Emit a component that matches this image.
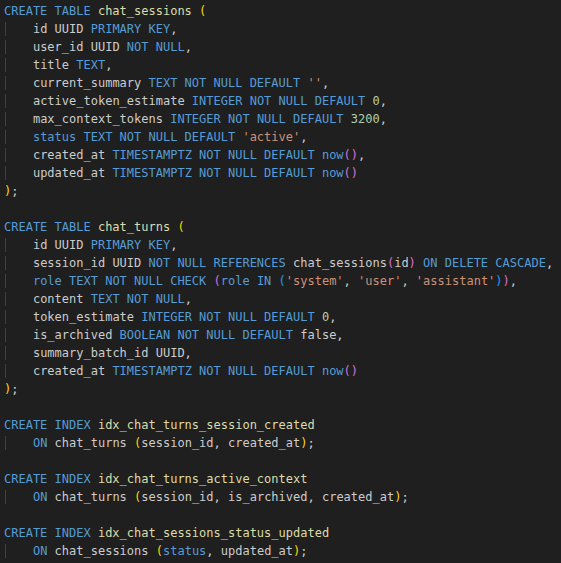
type Tok = [string, string];

const K = "text-[#569cd6]";
const N = "text-[#cccccc]";
const F = "text-[#dcdcaa]";
const S = "text-[#ce9178]";
const D = "text-[#b5cea8]";
const B1 = "text-[#ffd700]";
const B2 = "text-[#da70d6]";
const B3 = "text-[#179fff]";

// each line: indented?, tokens
const lines: [boolean, Tok[]][] = [
  [false, [[K, "CREATE TABLE "], [F, "chat_sessions "], [B1, "("]]],
  [true, [[N, "id UUID "], [K, "PRIMARY KEY"], [N, ","]]],
  [true, [[N, "user_id UUID "], [K, "NOT NULL"], [N, ","]]],
  [true, [[N, "title "], [K, "TEXT"], [N, ","]]],
  [true, [[N, "current_summary "], [K, "TEXT NOT NULL DEFAULT "], [S, "''"], [N, ","]]],
  [true, [[N, "active_token_estimate "], [K, "INTEGER NOT NULL DEFAULT "], [D, "0"], [N, ","]]],
  [true, [[N, "max_context_tokens "], [K, "INTEGER NOT NULL DEFAULT "], [D, "3200"], [N, ","]]],
  [true, [[K, "status TEXT NOT NULL DEFAULT "], [S, "'active'"], [N, ","]]],
  [true, [[N, "created_at "], [K, "TIMESTAMPTZ NOT NULL DEFAULT now"], [B2, "()"], [N, ","]]],
  [true, [[N, "updated_at "], [K, "TIMESTAMPTZ NOT NULL DEFAULT now"], [B2, "()"]]],
  [false, [[B1, ")"], [N, ";"]]],
  [false, []],
  [false, [[K, "CREATE TABLE "], [F, "chat_turns "], [B1, "("]]],
  [true, [[N, "id UUID "], [K, "PRIMARY KEY"], [N, ","]]],
  [
    true,
    [
      [N, "session_id UUID "],
      [K, "NOT NULL REFERENCES "],
      [N, "chat_sessions"],
      [B2, "("],
      [N, "id"],
      [B2, ")"],
      [K, " ON DELETE CASCADE"],
      [N, ","],
    ],
  ],
  [
    true,
    [
      [K, "role TEXT NOT NULL CHECK "],
      [B2, "("],
      [K, "role IN "],
      [B3, "("],
      [S, "'system'"],
      [N, ", "],
      [S, "'user'"],
      [N, ", "],
      [S, "'assistant'"],
      [B3, ")"],
      [B2, ")"],
      [N, ","],
    ],
  ],
  [true, [[N, "content "], [K, "TEXT NOT NULL"], [N, ","]]],
  [true, [[N, "token_estimate "], [K, "INTEGER NOT NULL DEFAULT "], [D, "0"], [N, ","]]],
  [true, [[N, "is_archived "], [K, "BOOLEAN NOT NULL DEFAULT "], [N, "false,"]]],
  [true, [[N, "summary_batch_id UUID,"]]],
  [true, [[N, "created_at "], [K, "TIMESTAMPTZ NOT NULL DEFAULT now"], [B2, "()"]]],
  [false, [[B1, ")"], [N, ";"]]],
  [false, []],
  [false, [[K, "CREATE INDEX "], [F, "idx_chat_turns_session_created"]]],
  [true, [[K, "ON "], [N, "chat_turns "], [B1, "("], [N, "session_id, created_at"], [B1, ")"], [N, ";"]]],
  [false, []],
  [false, [[K, "CREATE INDEX "], [F, "idx_chat_turns_active_context"]]],
  [
    true,
    [[K, "ON "], [N, "chat_turns "], [B1, "("], [N, "session_id, is_archived, created_at"], [B1, ")"], [N, ";"]],
  ],
  [false, []],
  [false, [[K, "CREATE INDEX "], [F, "idx_chat_sessions_status_updated"]]],
  [true, [[K, "ON "], [N, "chat_sessions "], [B1, "("], [K, "status"], [N, ", updated_at"], [B1, ")"], [N, ";"]]],
];

export default function App() {
  return (
    <div
      className="h-[563px] w-[561px] overflow-hidden bg-[#1f1f1f] pl-[4px] pt-[2px] text-[12px] leading-[18px]"
      style={{ fontFamily: '"DejaVu Sans Mono", "Liberation Mono", monospace' }}
    >
      {lines.map(([indent, toks], i) => (
        <div key={i} className="h-[18px] whitespace-pre">
          {indent && (
            <span className="bg-[linear-gradient(to_right,transparent_1px,#404040_1px,#404040_2px,transparent_2px)]">
              {"    "}
            </span>
          )}
          {toks.map(([cls, text], j) => (
            <span key={j} className={cls}>
              {text}
            </span>
          ))}
          {toks.length === 0 && " "}
        </div>
      ))}
    </div>
  );
}
